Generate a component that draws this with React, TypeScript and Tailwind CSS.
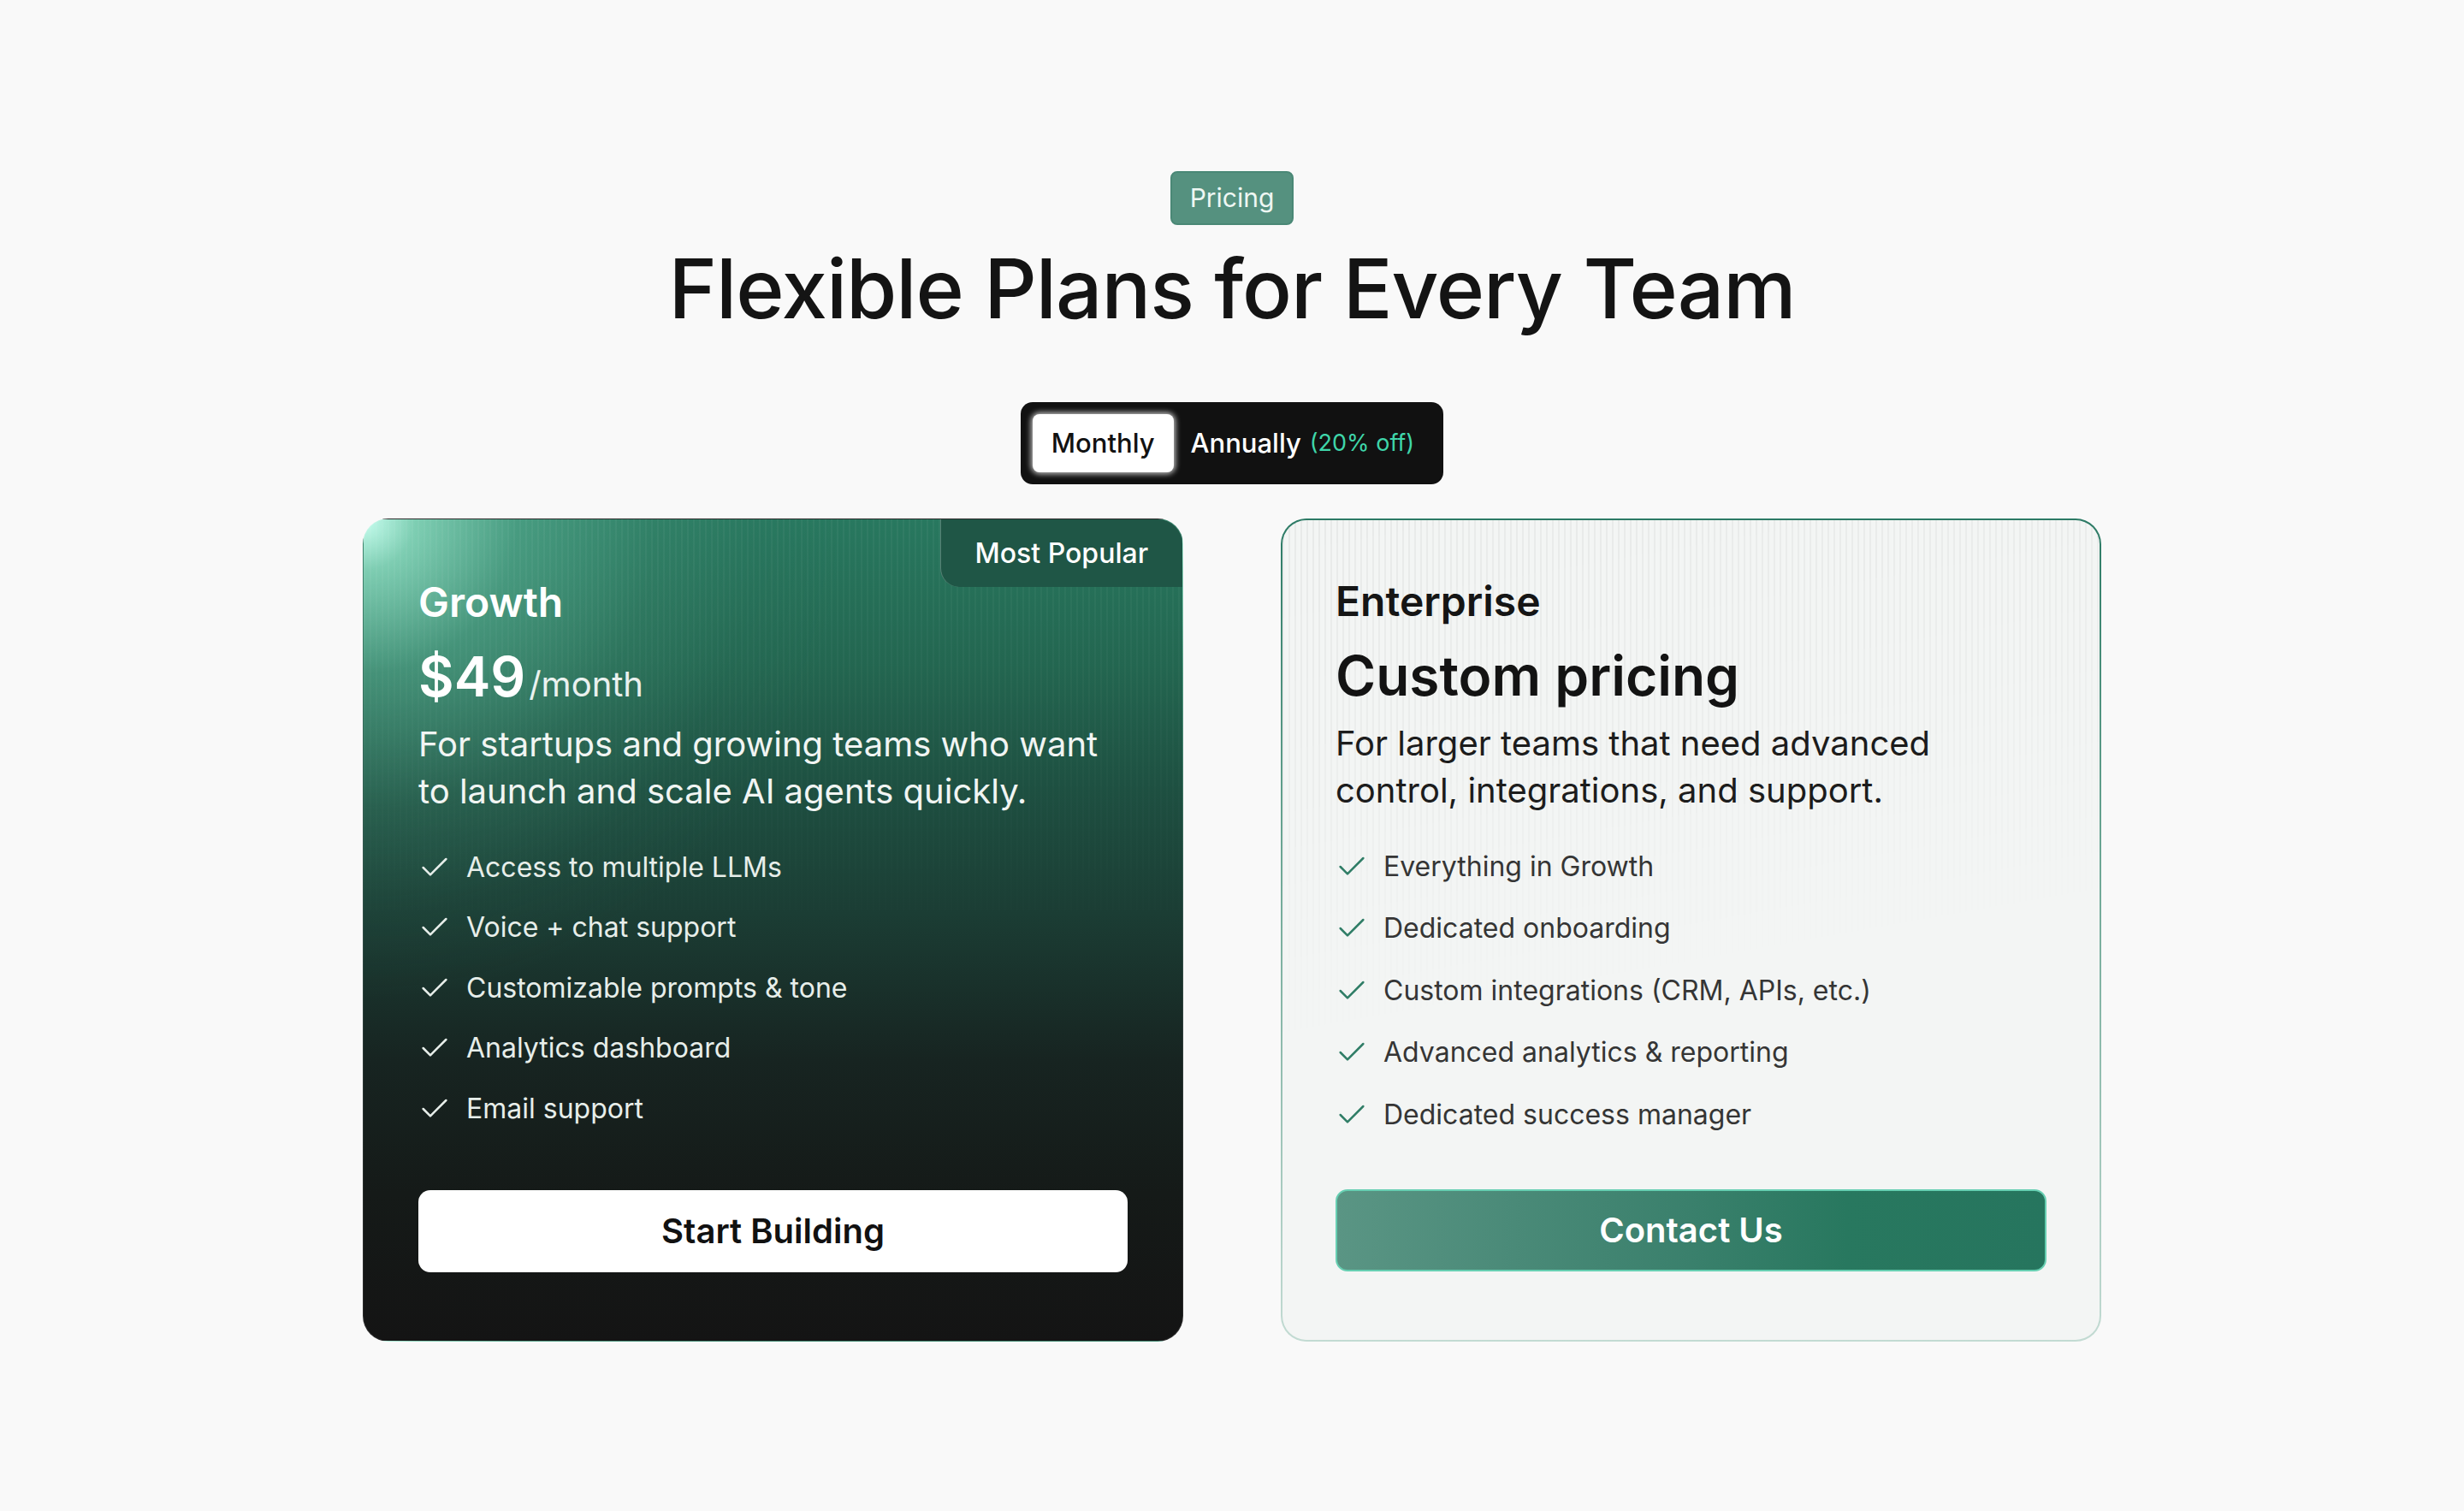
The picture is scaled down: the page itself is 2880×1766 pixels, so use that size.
import { Check } from "lucide-react";

const growthFeatures = [
  "Access to multiple LLMs",
  "Voice + chat support",
  "Customizable prompts & tone",
  "Analytics dashboard",
  "Email support",
];

const enterpriseFeatures = [
  "Everything in Growth",
  "Dedicated onboarding",
  "Custom integrations (CRM, APIs, etc.)",
  "Advanced analytics & reporting",
  "Dedicated success manager",
];

export default function App() {
  return (
    <main className="flex min-h-screen flex-col items-center bg-[#f9f9f9] pt-[200px] font-['Inter',sans-serif] text-[#141414]">
      {/* Eyebrow */}
      <span className="flex h-[63px] items-center rounded-[8px] border-2 border-[#4a8876] bg-[#55917f] px-[21px] text-[30px] text-[#eef7f3]">
        Pricing
      </span>

      <h1 className="mt-[26px] text-[96px] font-medium leading-none tracking-[-0.011em]">
        Flexible Plans for Every Team
      </h1>

      {/* Billing toggle */}
      <div className="mt-[85px] flex h-[96px] items-stretch rounded-[14px] bg-[#111111] p-[14px] text-[31px] font-medium">
        <button
          type="button"
          className="rounded-[8px] bg-white px-[22px] text-[#111] shadow-[0_0_6px_2px_rgba(255,255,255,0.75)]"
        >
          Monthly
        </button>
        <button type="button" className="flex items-center gap-[10px] px-5 text-white">
          Annually
          <span className="text-[27px] font-normal text-[#3fd6aa]">(20% off)</span>
        </button>
      </div>

      {/* Plans */}
      <div className="mt-[40px] grid w-[2032px] grid-cols-2 gap-[114px]">
        {/* Growth */}
        <div className="relative overflow-hidden rounded-[30px] border border-white/10 bg-[radial-gradient(circle_at_0%_0%,rgba(200,255,240,1)_0px,rgba(155,235,207,0.75)_60px,rgba(110,200,170,0.45)_180px,rgba(80,160,132,0.22)_340px,rgba(60,130,108,0.08)_460px,transparent_560px),linear-gradient(180deg,#28785f_0%,#236650_18%,#1e5142_32%,#1b3d34_48%,#172421_66%,#151a18_82%,#141414_100%)] px-[64px] pb-[78px] pt-[68px] text-white">
          <div className="pointer-events-none absolute inset-0 bg-[repeating-linear-gradient(90deg,rgba(255,255,255,0.045)_0px,rgba(255,255,255,0.045)_2px,transparent_2px,transparent_7px)] [mask-image:linear-gradient(to_bottom,black,transparent_55%)]" />

          <div className="absolute right-0 top-0 flex h-[79px] items-center rounded-bl-[22px] border-l border-white/25 bg-[#1f5646] px-[40px] text-[32px] font-medium text-white">
            Most Popular
          </div>

          <div className="relative">
            <h2 className="text-[48px] font-semibold leading-[1.2]">Growth</h2>
            <p className="mt-[26px] flex items-baseline leading-none">
              <span className="text-[64px] font-semibold">$49</span>
              <span className="ml-[4px] text-[40px] text-white/90">/month</span>
            </p>
            <p className="mt-[19px] max-w-[820px] text-[40px] leading-[55px] text-[#f1f5f3]">
              For startups and growing teams who want to launch and scale AI agents quickly.
            </p>

            <ul className="mt-[42px] flex flex-col gap-[30.5px]">
              {growthFeatures.map((f) => (
                <li key={f} className="flex items-center gap-[17px] text-[32px] leading-[40px] text-[#e7eeea]">
                  <Check size={40} strokeWidth={1.5} className="-ml-[1px] shrink-0 text-[#e7eeea]" />
                  {f}
                </li>
              ))}
            </ul>

            <button
              type="button"
              className="mt-[75px] flex h-[96px] w-full items-center justify-center rounded-[14px] bg-white text-[40px] font-semibold text-[#111]"
            >
              Start Building
            </button>
          </div>
        </div>

        {/* Enterprise */}
        <div className="rounded-[30px] bg-[linear-gradient(180deg,#2c7a65_0%,#6aa593_40%,#c3dbd3_100%)] p-[2px]">
          <div className="relative h-full overflow-hidden rounded-[28px] bg-[#f3f5f4] px-[62px] pb-[80px] pt-[66px]">
            <div className="pointer-events-none absolute inset-0 bg-[repeating-linear-gradient(90deg,rgba(0,0,0,0.045)_0px,rgba(0,0,0,0.045)_2px,transparent_2px,transparent_7px)] [mask-image:linear-gradient(170deg,black_0%,rgba(0,0,0,0.6)_30%,transparent_55%)]" />

            <div className="relative">
              <h2 className="text-[48px] font-semibold leading-[1.2] text-[#151515]">Enterprise</h2>
              <p className="mt-[26px] text-[64px] font-semibold leading-none text-[#131313]">Custom pricing</p>
              <p className="mt-[19px] max-w-[820px] text-[40px] leading-[55px] text-[#1c1c1c]">
                For larger teams that need advanced control, integrations, and support.
              </p>

              <ul className="mt-[42px] flex flex-col gap-[32.5px]">
                {enterpriseFeatures.map((f) => (
                  <li key={f} className="flex items-center gap-[17px] text-[32px] leading-[40px] text-[#353535]">
                    <Check size={40} strokeWidth={1.5} className="-ml-[1px] shrink-0 text-[#2f7d66]" />
                    {f}
                  </li>
                ))}
              </ul>

              <button
                type="button"
                className="mt-[67px] flex h-[96px] w-full items-center justify-center rounded-[14px] border-2 border-[#67cfb2] bg-[linear-gradient(90deg,#5a9584_0%,#4a8a78_25%,#3a806c_50%,#28785f_72%,#26755e_100%)] text-[40px] font-semibold text-white"
              >
                Contact Us
              </button>
            </div>
          </div>
        </div>
      </div>
    </main>
  );
}
